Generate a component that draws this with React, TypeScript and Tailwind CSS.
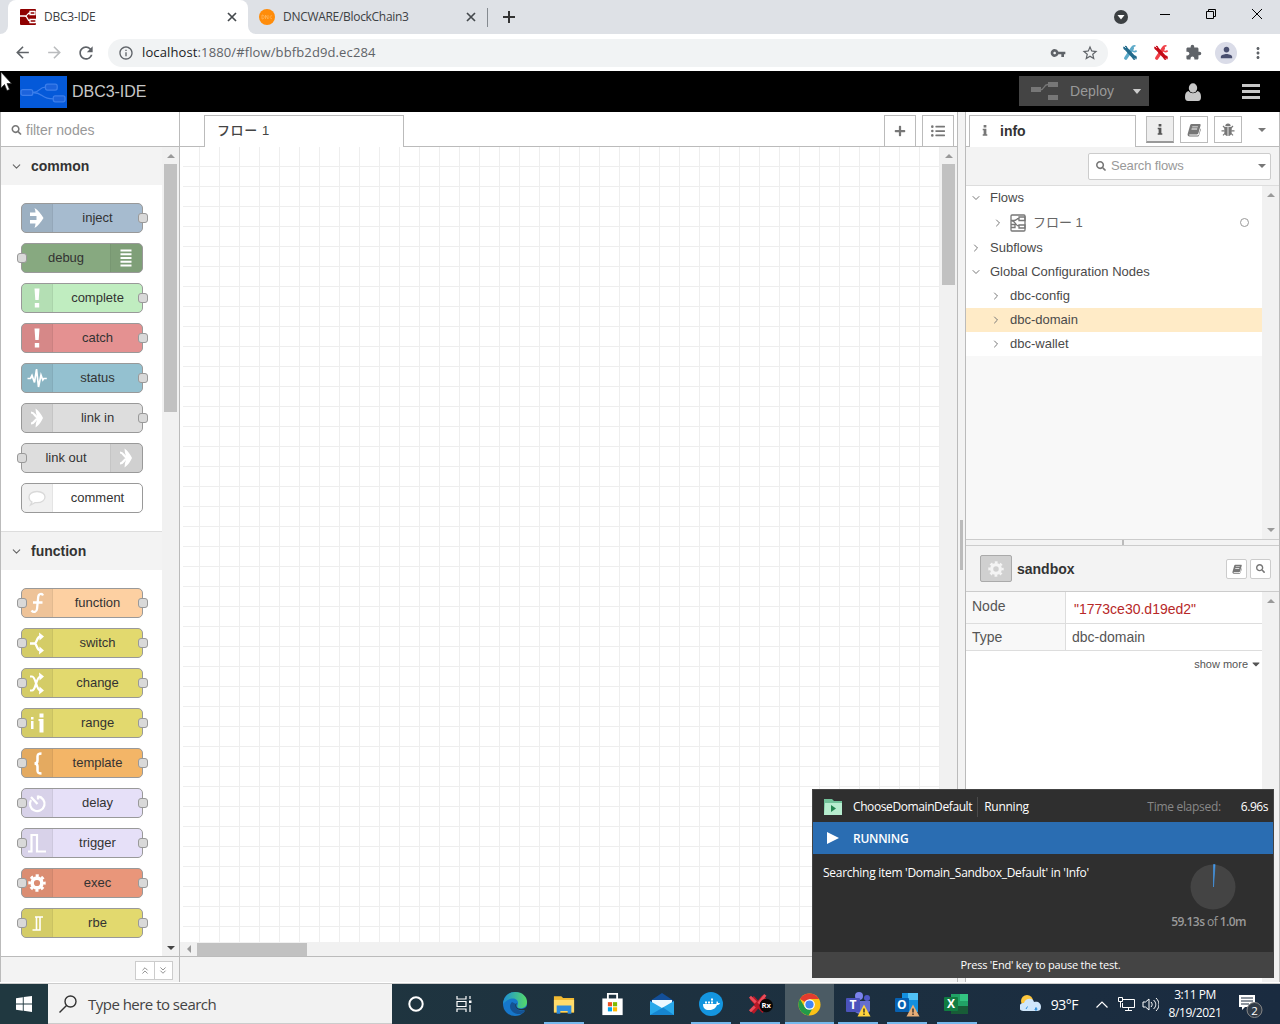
import React from "react";
import { FaSearch, FaPlus, FaListUl, FaCaretDown } from "react-icons/fa";
import { FiChevronDown, FiChevronRight, FiChevronsDown, FiChevronsUp } from "react-icons/fi";
import { MdArrowBack, MdArrowForward, MdRefresh, MdInfoOutline, MdStarBorder, MdVpnKey, MdMoreVert, MdPerson, MdExtension } from "react-icons/md";

type IconProps = { className?: string };

const SEGOE = "font-['Open_Sans','Noto_Sans',sans-serif]";

function FlowLogo({ className, tone }: { className: string; tone: string }) {
  return (
    <svg viewBox="0 0 48 32" className={className} fill="none" stroke={tone} strokeWidth="1.3">
      <rect x="1" y="13.500" width="12" height="6" rx="2" fill="#1c63dc" />
      <rect x="26" y="8" width="12" height="6" rx="2" fill="#1c63dc" />
      <rect x="34" y="20" width="12" height="6" rx="2" fill="#1c63dc" />
      <path d="M13 16.500c8 0 6-5.500 13-5.500M13 16.500c11 0 8 6.500 21 6.500" />
    </svg>
  );
}

function Gear({ className }: IconProps) {
  return (
    <svg viewBox="0 0 18 18" className={className} fill="none" stroke="currentColor">
      <circle cx="9" cy="9" r="4.900" strokeWidth="3.600" />
      <circle cx="9" cy="9" r="7.400" strokeWidth="2.600" strokeDasharray="3.100 2.712" strokeDashoffset="1.550" />
    </svg>
  );
}

function Close({ className }: IconProps) {
  return (
    <svg viewBox="0 0 10 10" className={className} fill="none" stroke="#45494d" strokeWidth="1.700">
      <path d="m1 1 8 8M9 1 1 9" />
    </svg>
  );
}

function Book({ className }: IconProps) {
  return (
    <svg viewBox="0 0 14 14" className={className} fill="currentColor">
      <path fillRule="evenodd" d="M4.6 1h8c.8 0 1.200.6 1 1.300l-2.200 8c-.2.7-.7 1.100-1.400 1.100H2.700c-.5 0-.7.5-.4.8.2.2.4.3.7.3h7.700c.6 0 .9-.3 1.100-.8l1.600-6.200c.5.400.4 1 .3 1.400l-1.700 5.500c-.2.7-.8 1.100-1.400 1.100H2.500C1.200 13.500.2 12 .7 10.700L3.200 2C3.400 1.400 3.900 1 4.600 1zM5.400 3.400l-.3.9h5.600l.3-.9zM4.700 5.600l-.3.9H10l.3-.9z" />
    </svg>
  );
}

function Bug({ className }: IconProps) {
  return (
    <svg viewBox="0 0 14 14" className={className}>
      <path d="M4.300 3.300a2.700 2.700 0 0 1 5.400 0z" fill="currentColor" />
      <path d="M3.300 4h3.300v9C4.500 13 3.300 11 3.300 9zM7.400 4h3.300v5c0 2-1.200 4-3.300 4z" fill="currentColor" />
      <path d="M4 5 2 3M10 5l2-2M3.500 7.800H.5M10.400 7.800h3.100M4 10.400l-2 2M10 10.400l2 2" stroke="currentColor" strokeWidth="1.200" />
    </svg>
  );
}

function InfoGlyph({ className }: IconProps) {
  return (
    <svg viewBox="0 0 6 12" className={className} fill="currentColor">
      <path d="M1.500 0h3v2.600h-3zM.5 4h4v6h1v1.600h-5V10h1V5.600h-1z" />
    </svg>
  );
}

const glyphs: Record<string, React.ReactNode> = {
  inject: <path d="M5 6.500h5.500C10.500 5 10 3.500 9.500 2c3.500 2 6.500 6 9 10-2.500 4-5.500 8-9 10 .5-1.500 1-3 1-4.500H5V14h6.500v-4H5z" fill="#fff" />,
  debug: <path d="M6.500 4.500h11M6.500 8.300h11M6.500 12h11M6.500 15.800h11M6.500 19.500h11" stroke="#fff" strokeWidth="1.900" />,
  alert: <path d="M9.500 2.500h5l-.8 11.500h-3.400zM9.800 17h4.400v4.500H9.800z" fill="#fff" />,
  status: <path d="M2.500 12.500h3l1.500-3 2.500 7L11.500 3l2 18 2.500-12 1.800 5 1-1.500h3" fill="none" stroke="#fff" strokeWidth="1.700" />,
  link: (
    <>
      <path d="M10.500 2.500c3.500 2.500 6 6 7.500 9.500-1.500 3.500-4 7-7.500 9.500l.5-4.500c1.500-3 1.500-7 0-10z" fill="#fff" />
      <path d="M6 6.500c4 0 4 5.500 8 5.500M6 17.500c4 0 4-5.500 8-5.500" fill="none" stroke="#fff" strokeWidth="2.200" />
    </>
  ),
  comment: <path d="M12 5.500c5 0 8 2.500 8 5.500s-3 5.700-8 5.700H10L5.500 19 7 16c-2-1-3-3-3-5 0-3 3-5.500 8-5.500z" fill="#fff" stroke="#d9d9d9" strokeWidth="1.300" />,
  function: <path d="M18 4.500c-1-2.500-4.500-2-4.800 1.500L12 18c-.3 3-3.500 4-5.500 1.500M8 11.500h9.500" fill="none" stroke="#fff" strokeWidth="2.300" />,
  switch: (
    <>
      <path d="M5 12.500h4.500c2.500 0 2-7 6-7M9.500 12.500c2.500 0 2 7 6 7" fill="none" stroke="#fff" strokeWidth="2.400" />
      <path d="M14 1.500 19 5.500l-4.500 4zM14.500 15.500l4.500 4-5 4z" fill="#fff" />
    </>
  ),
  change: (
    <>
      <path d="M5 5.500h2c4 0 4 14 8.500 14M5 19.500h2c4 0 4-14 8.500-14" fill="none" stroke="#fff" strokeWidth="2.200" />
      <path d="M14 1.500 19 5.500l-4.500 4zM14.500 15.500l4.500 4-5 4z" fill="#fff" />
    </>
  ),
  range: <path d="M6 6h2.500v2.500H6zM6 10h2.500v8H6zM14.500 2.500h4v4h-4zM14.500 8h4v13.500h-4zM13.500 8h3v2h-3z" fill="#fff" />,
  template: <path d="M16.500 2.500c-3.500 0-4 .8-4 3v4c0 2-1 3-3 3 2 0 3 1 3 3v4c0 2.200.5 3 4 3" fill="none" stroke="#fff" strokeWidth="2.500" />,
  delay: <path d="M13 5.500a7.300 7.300 0 1 1-7 3.500M6 6l6.500 7M13 4.500v4" fill="none" stroke="#fff" strokeWidth="2.300" />,
  trigger: <path d="M3 20.500h3.500V4h5.500v16.500h9" fill="none" stroke="#fff" strokeWidth="2.200" />,
  rbe: <path d="M7.500 19h4V6h6.500M11.500 6H10M18 6h-3v13h-3.500" fill="none" stroke="#fff" strokeWidth="1.600" />,
};

type PaletteNode = { name: string; icon: string; color: string; left?: boolean; right?: boolean; flip?: boolean };

const commonNodes: PaletteNode[] = [
  { name: "inject", icon: "inject", color: "bg-[#a6bbcf]", right: true },
  { name: "debug", icon: "debug", color: "bg-[#87a980]", left: true, flip: true },
  { name: "complete", icon: "alert", color: "bg-[#c0edc0]", right: true },
  { name: "catch", icon: "alert", color: "bg-[#e49191]", right: true },
  { name: "status", icon: "status", color: "bg-[#94c1d0]", right: true },
  { name: "link in", icon: "link", color: "bg-[#dddddd]", right: true },
  { name: "link out", icon: "link", color: "bg-[#dddddd]", left: true, flip: true },
  { name: "comment", icon: "comment", color: "bg-white" },
];

const functionNodes: PaletteNode[] = [
  { name: "function", icon: "function", color: "bg-[#fdd0a2]", left: true, right: true },
  { name: "switch", icon: "switch", color: "bg-[#e2d96e]", left: true, right: true },
  { name: "change", icon: "change", color: "bg-[#e2d96e]", left: true, right: true },
  { name: "range", icon: "range", color: "bg-[#e2d96e]", left: true, right: true },
  { name: "template", icon: "template", color: "bg-[#f3b567]", left: true, right: true },
  { name: "delay", icon: "delay", color: "bg-[#e6e0f8]", left: true, right: true },
  { name: "trigger", icon: "trigger", color: "bg-[#e6e0f8]", left: true, right: true },
  { name: "exec", icon: "exec", color: "bg-[#e9967a]", left: true, right: true },
  { name: "rbe", icon: "rbe", color: "bg-[#e2d96e]", left: true, right: true },
];

function NodeItem({ node }: { node: PaletteNode }) {
  return (
    <div className={`relative flex h-[30px] w-[122px] rounded-[5px] border border-[#999] ${node.color} ${node.flip ? "flex-row-reverse" : ""}`}>
      <div className={`flex shrink-0 items-center justify-center bg-black/[0.06] ${node.flip ? "w-8 rounded-r-[4px] border-l pr-px" : "w-[31px] rounded-l-[4px] border-r pr-px"} border-black/5`}>
        {node.icon === "exec" ? <Gear className="h-[18px] w-[18px] text-white" /> : <svg viewBox="0 0 24 24" className="h-6 w-6">{glyphs[node.icon]}</svg>}
      </div>
      <div className="flex-1 text-center text-[13px] leading-[27px] text-[#333]">{node.name}</div>
      {node.left && <i className="absolute top-[9px] -left-[5px] h-[10px] w-[10px] rounded-[3px] border border-[#999] bg-[#d9d9d9]" />}
      {node.right && <i className="absolute top-[9px] -right-[6px] h-[10px] w-[10px] rounded-[3px] border border-[#999] bg-[#d9d9d9]" />}
    </div>
  );
}

function Category({ title, nodes, last }: { title: string; nodes: PaletteNode[]; last?: boolean }) {
  return (
    <div className={last ? "" : "border-b border-[#ddd]"}>
      <div className="flex h-[38px] items-center bg-[#f3f3f3] pl-[9px] text-sm font-bold text-[#333]">
        <FiChevronDown className="h-[13px] w-[13px] text-[#666]" />
        <span className="ml-2">{title}</span>
      </div>
      <div className="flex flex-col gap-[10px] py-[18px] pl-5">
        {nodes.map((n) => <NodeItem key={n.name} node={n} />)}
      </div>
    </div>
  );
}

function Tri({ dir, dark }: { dir: "up" | "down" | "left"; dark?: boolean }) {
  const d = dir === "up" ? "M0 6 4 2l4 4z" : dir === "down" ? "M0 2h8L4 6z" : "M6 0v8L2 4z";
  return <svg viewBox="0 0 8 8" className={`h-2 w-2 ${dark ? "text-[#444]" : "text-[#999]"}`} fill="currentColor"><path d={d} /></svg>;
}

function Caret() {
  return <svg viewBox="0 0 8 4" className="h-1 w-2" fill="#777"><path d="M0 0h8L4 4z" /></svg>;
}

function Palette() {
  return (
    <div className="flex w-[180px] flex-col border-x border-[#bbb] bg-white">
      <div className="flex h-[35px] items-center border-b border-[#bbb] pt-px pl-[10px] text-sm text-[#999]">
        <FaSearch className="h-[10px] w-[11px] text-[#777]" />
        <span className="ml-1">filter nodes</span>
      </div>
      <div className="flex h-[809px]">
        <div className="w-[161px] overflow-hidden">
          <Category title="common" nodes={commonNodes} />
          <Category title="function" nodes={functionNodes} last />
        </div>
        <div className="flex flex-1 flex-col items-center bg-[#f1f1f1]">
          <div className="flex h-[17px] items-center"><Tri dir="up" /></div>
          <div className="h-[248px] w-[13px] bg-[#c1c1c1]" />
          <div className="mt-auto flex h-[17px] items-center"><Tri dir="down" dark /></div>
        </div>
      </div>
      <div className="flex flex-1 items-center justify-end border-t border-[#bbb] bg-[#f3f3f3] pt-px pr-[6px]">
        <div className="flex h-[19px] w-[38px] divide-x divide-[#ccc] border border-[#ccc] bg-white text-[#888]">
          <div className="flex flex-1 items-center justify-center"><FiChevronsUp className="h-[11px]" /></div>
          <div className="flex flex-1 items-center justify-center"><FiChevronsDown className="h-[11px]" /></div>
        </div>
      </div>
    </div>
  );
}

function Workspace() {
  return (
    <div className="flex w-[778px] flex-col border-r border-[#bbb] bg-white">
      <div className="flex h-[35px] items-end">
        <div className="h-full w-6 border-b border-[#bbb]" />
        <div className="h-8 w-[200px] border-x border-t border-[#bbb] pl-3 text-[13px] leading-[29px] font-medium tracking-[0.6px] text-[#444] font-['Liberation_Sans','Noto_Sans_CJK_JP',sans-serif]">フロー 1</div>
        <div className="flex h-full flex-1 items-end justify-end gap-[6px] border-b border-[#bbb] pr-[3px] text-[#777]">
          <div className="flex h-[31px] w-8 items-center justify-center border-x border-t border-[#bbb]"><FaPlus className="h-3 w-3" /></div>
          <div className="flex h-[31px] w-8 items-center justify-center border-x border-t border-[#bbb]"><FaListUl className="h-[14px] w-[14px]" /></div>
        </div>
      </div>
      <div className="flex h-[795px] pl-[3px]">
        <div className="w-[757px] bg-[linear-gradient(to_right,#eee_1px,transparent_1px),linear-gradient(to_bottom,#eee_1px,transparent_1px)] bg-[size:20px_20px] bg-[position:16px_19px]" />
        <div className="flex flex-1 flex-col items-center bg-[#f1f1f1]">
          <div className="flex h-[17px] items-center"><Tri dir="up" /></div>
          <div className="h-[121px] w-[13px] bg-[#c1c1c1]" />
        </div>
      </div>
      <div className="flex h-[14px] items-center bg-[#f1f1f1]">
        <div className="flex w-[17px] justify-center"><Tri dir="left" /></div>
        <div className="h-[13px] w-[110px] bg-[#c1c1c1]" />
      </div>
      <div className="flex-1 border-t border-[#bbb] bg-[#f3f3f3]" />
    </div>
  );
}

function TreeRow({ label, open, nested, active }: { label: string; open?: boolean; nested?: boolean; active?: boolean }) {
  return (
    <div className={`flex h-6 items-center pb-px ${nested ? "pl-[24px]" : "pl-[4px]"} ${active ? "bg-[#ffebc7]" : "bg-white"}`}>
      {open ? <FiChevronDown className="h-3 w-3 text-[#777]" /> : <FiChevronRight className="h-3 w-3 text-[#777]" />}
      <span className="ml-2">{label}</span>
    </div>
  );
}

function Sidebar() {
  return (
    <div className="flex w-[315px] flex-col border-x border-[#bbb] bg-white text-[#555]">
      <div className="flex h-[35px] items-end">
        <div className="h-full w-[3px] border-b border-[#bbb]" />
        <div className="flex h-8 w-[167px] items-center border-x border-t border-[#bbb] pb-[2px] pl-3 text-sm font-bold text-[#333]">
          <InfoGlyph className="h-[11px] w-[6px] text-[#777]" />
          <span className="ml-3">info</span>
        </div>
        <div className="flex h-full flex-1 items-center border-b border-[#bbb] pt-px pl-[10px] text-[#777]">
          <div className="flex h-[27px] w-7 items-center justify-center border border-b-2 border-[#bbb] border-b-[#999] bg-[#eee]"><InfoGlyph className="h-[11px] w-[6px] text-[#555]" /></div>
          <div className="ml-[6px] flex h-[27px] w-7 items-center justify-center border border-[#bbb]"><Book className="h-[14px] w-[14px]" /></div>
          <div className="ml-[6px] flex h-[27px] w-7 items-center justify-center border border-[#bbb]"><Bug className="h-[14px] w-[14px]" /></div>
          <div className="ml-4"><Caret /></div>
        </div>
      </div>
      <div className="flex h-[39px] items-center justify-end border-b border-[#ddd] bg-[#f3f3f3] pr-2">
        <div className="flex h-[27px] w-[183px] items-center rounded-[2px] border border-[#ccc] bg-white pr-1 pl-[7px] text-[13px] text-[#999]">
          <FaSearch className="h-[10px] w-[10px] text-[#777]" />
          <span className="ml-[5px] flex-1 tracking-[-0.15px]">Search flows</span>
          <Caret />
        </div>
      </div>
      <div className="flex h-[353px]">
        <div className="w-[296px] bg-[#f8f8f8] text-[13px] text-[#4a4a4a]">
          <TreeRow label="Flows" open />
          <div className="flex h-[26px] items-center bg-white pr-[13px] pb-px pl-[26px] font-['Liberation_Sans','Noto_Sans_CJK_JP',sans-serif]">
            <FiChevronRight className="h-3 w-3 text-[#777]" />
            <svg viewBox="0 0 16 18" className="ml-[6px] h-[18px] w-4" fill="none" stroke="#777" strokeWidth="1.300">
              <rect x="1" y="1" width="14" height="16" rx="1" />
              <path d="M1 6.500h3c3 0 2-2 5-2M1 6.500c5 0 4 5.500 8 5.500M9 3h6v3.500H9zM9 11h6v3H9zM1 10.500h4v3H1" />
            </svg>
            <span className="ml-[7px] flex-1 text-[#666]">フロー 1</span>
            <span className="h-[9px] w-[9px] rounded-full border border-[#999]" />
          </div>
          <TreeRow label="Subflows" />
          <TreeRow label="Global Configuration Nodes" open />
          <TreeRow label="dbc-config" nested />
          <TreeRow label="dbc-domain" nested active />
          <TreeRow label="dbc-wallet" nested />
        </div>
        <div className="flex flex-1 flex-col items-center justify-between bg-[#f1f1f1] py-[5px]"><Tri dir="up" /><Tri dir="down" /></div>
      </div>
      <div className="flex h-[7px] items-center justify-center border-y border-[#ccc] bg-[#f3f3f3]"><div className="h-[5px] w-[2px] bg-[#bbb]" /></div>
      <div className="flex h-[46px] items-center border-b border-[#ccc] bg-[#f3f3f3] pr-2 pl-[14px]">
        <div className="flex h-[27px] w-8 items-center justify-center rounded-[2px] border border-[#aaa] bg-[#d0d0d0]"><Gear className="h-4 w-4 text-[#f4f4f4]" /></div>
        <span className="ml-[5px] flex-1 text-sm font-bold text-[#333]">sandbox</span>
        <div className="flex h-5 w-[21px] items-center justify-center rounded-[2px] border border-[#ccc] bg-white text-[#777]"><Book className="h-[10px] w-[10px]" /></div>
        <div className="ml-[3px] flex h-5 w-[21px] items-center justify-center rounded-[2px] border border-[#ccc] bg-white text-[#777]"><FaSearch className="h-[9px] w-[9px]" /></div>
      </div>
      <div className="flex flex-1">
        <div className="w-[296px]">
          <div className="flex h-8 border-b border-[#ddd] text-sm">
            <div className="w-[100px] border-r border-[#ddd] bg-[#f8f8f8] pt-1 pl-[6px]">Node</div>
            <div className="pt-[7px] pl-2 text-[#b72828]">"1773ce30.d19ed2"</div>
          </div>
          <div className="flex h-[27px] border-b border-[#ddd] text-sm">
            <div className="w-[100px] border-r border-[#ddd] bg-[#f8f8f8] pt-[3px] pl-[6px]">Type</div>
            <div className="pt-[3px] pl-[6px]">dbc-domain</div>
          </div>
          <div className="flex h-[26px] items-center justify-end gap-1 pr-[2px] text-[11px]">show more <FaCaretDown className="h-[12px] w-2" /></div>
        </div>
        <div className="flex flex-1 flex-col items-center bg-[#f1f1f1] pt-[5px]"><Tri dir="up" /></div>
      </div>
    </div>
  );
}

function CrossTool({ a, b }: { a: string; b: string }) {
  return (
    <svg viewBox="0 0 16 18" className="h-[17px] w-4" fill="none">
      <path d="m3.500 15 7-10.500" stroke={a} strokeWidth="3.600" strokeLinecap="round" />
      <path d="m3 4 4.500 5 5 5.500" stroke={b} strokeWidth="3.600" strokeLinecap="round" />
      <path d="M13.800 2.200A3 3 0 1 0 15 7" stroke={a} strokeWidth="1.700" />
      <circle cx="13" cy="14.500" r="2.300" fill={b} /><circle cx="3" cy="4" r="2.100" fill={b} />
      <path d="m1.500 2 2 2M13 15.500l2 1.500" stroke="#fff" strokeWidth="1" />
    </svg>
  );
}

function Browser() {
  return (
    <div className={SEGOE}>
      <div className="flex h-[34px] bg-[#dee1e6] text-xs text-[#3c4043]">
        <div className="w-2 bg-white"><div className="h-full rounded-br-lg bg-[#dee1e6]" /></div>
        <div className="flex w-[240px] items-center rounded-t-lg bg-white pr-[11px] pl-3">
          <svg viewBox="0 0 16 16" className="h-4 w-4" fill="none" stroke="#fff" strokeWidth="1.300">
            <rect width="16" height="16" rx="1" fill="#8f0000" stroke="none" />
            <path d="M0 7h5c3 0 2-3 5-3M5 7c3 0 2 5 5 5M10 2.500h5v3h-5zM10 10.500h6v3h-6z" />
          </svg>
          <span className="ml-2 flex-1 tracking-[-0.25px]">DBC3-IDE</span>
          <Close className="h-[10px] w-[10px]" />
        </div>
        <div className="bg-white"><div className="flex h-full w-[239px] items-center rounded-bl-lg bg-[#dee1e6] pr-[11px] pl-[11px]">
          <svg viewBox="0 0 16 16" className="h-4 w-4"><circle cx="8" cy="8" r="8" fill="#ff8c0a" /><path d="M3 6v4c3 0 3-4 0-4M6.500 10V6l2.500 4V6M13 7c-2.500-1.500-2.500 3.500 0 2.500" fill="none" stroke="#ffb559" strokeWidth=".8" /></svg>
          <span className="ml-2 flex-1 tracking-[-0.3px]">DNCWARE/BlockChain3</span>
          <Close className="h-[10px] w-[10px]" />
        </div></div>
        <div className="mt-2 h-[19px] w-px bg-[#858a90]" />
        <div className="flex items-center pl-[15px]"><svg viewBox="0 0 12 12" className="h-3 w-3" stroke="#333" strokeWidth="2"><path d="M0 6h12M6 0v12" /></svg></div>
        <div className="ml-auto flex items-center text-black">
          <svg viewBox="0 0 14 14" className="mt-[-1px] h-[14px] w-[14px]"><circle cx="7" cy="7" r="7" fill="#3c4043" /><path d="M3.500 5h7L7 9.500z" fill="#fff" /></svg>
          <svg viewBox="0 0 12 12" className="mt-[-6px] ml-[31px] h-3 w-3" stroke="currentColor"><path d="M1 6.500h10" /></svg>
          <svg viewBox="0 0 12 12" className="mt-[-6px] ml-[34px] h-3 w-3" fill="none" stroke="currentColor"><path d="M1.500 3.500h7v7h-7zM3.500 3V1.500h7v7H9" /></svg>
          <svg viewBox="0 0 12 12" className="mt-[-6px] mr-[17px] ml-[34px] h-3 w-3" stroke="currentColor"><path d="m1 1 10 10M11 1 1 11" /></svg>
        </div>
      </div>
      <div className="flex h-[37px] items-center bg-white pl-[13px] text-[#5f6368]">
        <MdArrowBack className="h-[19px] w-[19px]" />
        <MdArrowForward className="ml-[13px] h-[19px] w-[19px] text-[#babcbe]" />
        <MdRefresh className="ml-[12px] h-[20px] w-[20px]" />
        <div className="ml-3 flex h-7 w-[1000px] items-center rounded-full bg-[#f1f3f4] pl-[10px]">
          <MdInfoOutline className="h-4 w-4" />
          <span className="ml-2 flex-1 text-[13px] tracking-[0.12px]"><span className="text-[#202124]">localhost</span>:1880/#flow/bbfb2d9d.ec284</span>
          <MdVpnKey className="h-4 w-4" />
          <MdStarBorder className="mr-[9px] ml-[15px] h-[18px] w-[18px]" />
        </div>
        <div className="ml-[14px]"><CrossTool a="#5daac9" b="#236b8c" /></div>
        <div className="ml-[15px]"><CrossTool a="#f04048" b="#c50b18" /></div>
        <MdExtension className="ml-[16px] h-[17px] w-[17px]" />
        <div className="ml-[13px] flex h-[22px] w-[22px] items-center justify-center rounded-full bg-[#dadce8]"><MdPerson className="h-[17px] w-[17px] text-[#4a5070]" /></div>
        <MdMoreVert className="ml-3 h-[18px] w-[18px]" />
      </div>
    </div>
  );
}

function AppHeader() {
  return (
    <div className="flex h-[41px] items-center bg-black pt-px pl-5">
      <div className="h-8 w-[47px] bg-[#0459d9]"><FlowLogo className="h-8 w-[47px]" tone="#3c7eea" /></div>
      <span className="ml-[5px] text-base tracking-[-0.05px] text-[#c7c7c7]">DBC3-IDE</span>
      <div className="-mt-[2px] ml-auto flex h-[30px] w-[130px] items-center bg-[#444] pl-3 text-[#999]">
        <svg viewBox="0 0 28 20" className="h-5 w-7" fill="#777"><path d="M0 6h10v5H0zM17 1h10v5H17zM17 14h10v5H17z" /><path d="M9 9c5 0 3-5.500 8-5.500" fill="none" stroke="#777" strokeWidth="1.400" /></svg>
        <span className="ml-[11px] flex-1 text-sm tracking-[0.1px]">Deploy</span>
        <svg viewBox="0 0 10 6" className="mr-[7px] h-[5px] w-[10px]" fill="#ccc"><path d="M0 0h10L5 6z" /></svg>
      </div>
      <svg viewBox="0 0 16 18" className="-mt-px ml-9 h-[18px] w-4" fill="#c7c7c7"><ellipse cx="8" cy="5" rx="4.200" ry="4.700" /><path d="M3.500 8C1 8.500 0 11 0 14c0 2.500 1 4 3 4h10c2 0 3-1.500 3-4 0-3-1-5.500-3.500-6-2.500 3-6.500 3-9 0z" /></svg>
      <svg viewBox="0 0 18 15" className="-mt-px mr-5 ml-[41px] h-[15px] w-[18px]" stroke="#c7c7c7" strokeWidth="3"><path d="M0 1.500h18M0 7.500h18M0 13.500h18" /></svg>
    </div>
  );
}

function TestOverlay() {
  return (
    <div className={`absolute top-[789px] left-[812px] flex h-[189px] w-[462px] flex-col border border-[#444] bg-[#2f2f2f] text-xs text-white ${SEGOE}`}>
      <div className="flex h-8 items-center pt-px pr-[5px] pl-[11px]">
        <svg viewBox="0 0 18 16" className="h-4 w-[18px]"><path d="M0 0h8l2 2h8v14H0z" fill="#72c29a" /><path d="M1 4h17v12H0z" fill="#b7edcf" /><path d="M7 6v7l5-3.500z" fill="#238650" /></svg>
        <span className="ml-[11px] tracking-[-0.4px]">ChooseDomainDefault</span>
        <span className="ml-[5px] h-5 w-px bg-[#4a4a4a]" />
        <span className="ml-[6px] flex-1 tracking-[-0.25px]">Running</span>
        <span className="tracking-[-0.3px] text-[#888]">Time elapsed:</span>
        <span className="ml-[20px] tracking-[-0.45px]">6.96s</span>
      </div>
      <div className="flex h-8 items-center bg-[#2a6db2] pt-px pl-[14px]">
        <svg viewBox="0 0 12 12" className="-mt-px h-3 w-3" fill="#fff"><path d="m0 0 12 6-12 6z" /></svg>
        <span className="ml-[14px] font-semibold tracking-[-0.25px]">RUNNING</span>
      </div>
      <div className="flex h-[98px] justify-between pt-[10px] pr-[27px] pl-[10px]">
        <span className="pt-px tracking-[-0.28px]">Searching item 'Domain_Sandbox_Default' in 'Info'</span>
        <div className="flex flex-col items-end">
          <svg viewBox="0 0 46 46" className="mr-[10px] h-[46px] w-[46px]"><circle cx="23" cy="23" r="22.500" fill="#444" /><path d="M23.500 23V.5h1.600z" fill="#4397e8" stroke="#4397e8" strokeWidth=".6" /></svg>
          <span className="mt-1 tracking-[-0.55px] text-[#999]"><b className="font-semibold">59.13s</b> of <b className="font-semibold">1.0m</b></span>
        </div>
      </div>
      <div className="flex flex-1 items-center justify-center bg-[#444] pt-px pr-[5px] text-[11px] tracking-[-0.22px]">Press 'End' key to pause the test.</div>
    </div>
  );
}

const chromeIcon = (
  <svg viewBox="0 0 24 24" className="h-[23px] w-[23px]">
    <circle cx="12" cy="12" r="11.500" fill="#fbc116" />
    <path d="M12 12 2 6.200A11.500 11.500 0 0 1 22 6.300H12z" fill="#e33b2e" />
    <path d="M2 6.200a11.500 11.500 0 0 0 9 17.200l5-8.800L12 12 7 14.500z" fill="#229a49" />
    <circle cx="12" cy="12" r="5.600" fill="#fff" /><circle cx="12" cy="12" r="4.300" fill="#4285f4" />
  </svg>
);

const warning = (c: string) => <><path d="m18 12.500-6.500 12h13z" fill={c} /><path d="M18 16.500v4M18 21.500V23" stroke="#222" strokeWidth="1.300" /></>;

const taskIcons: { bar?: boolean; active?: boolean; art: React.ReactNode }[] = [
  { art: <svg viewBox="0 0 16 16" className="mr-[2px] h-4 w-4"><circle cx="8" cy="8" r="6.700" fill="none" stroke="#fff" strokeWidth="2" /></svg> },
  { art: <svg viewBox="0 0 16 16" className="mr-[4px] h-4 w-4" fill="none" stroke="#fff" strokeWidth="1.200"><path d="M1 0v3h9V0M1 16v-3h9v3M1 5.500h9v5H1zM14 0v3M14 9v7" /><path d="M13 4.500h2.500v2.500H13z" fill="#fff" stroke="none" /></svg> },
  { art: <svg viewBox="0 0 24 24" className="h-6 w-6"><defs><linearGradient id="edgeTop"><stop stopColor="#1d8ed6" /><stop offset="1" stopColor="#55db69" /></linearGradient></defs><circle cx="12" cy="12" r="12" fill="#1677cb" /><path d="M0 12C1 3 7 0 12 0c8 0 12 5 12 10 0 5-4 7-8 6-3-1-1-3-1-5 0-5-8-7-15 1z" fill="url(#edgeTop)" /><path d="M9 10c-5 5 0 13 9 12 2-1 4-3 4.500-4.500C16 21 12 16 13 12z" fill="#155293" /><path d="M14 11c-2 3 0 6 4 6 2 0 5-1 6-3v6l-3-2c-7 2-11-5-7-7z" fill="#21363f" /></svg> },
  { bar: true, art: <svg viewBox="0 0 24 22" className="h-[21px] w-[22px]"><path d="M1 2h8l2 2h12v16H1z" fill="#f2ba32" /><path d="M1 6h22v13H1z" fill="#ffdc6b" /><path d="M4 12h16v9h-4v-3H8v3H4z" fill="#2d8bdc" /></svg> },
  { art: <svg viewBox="0 0 24 26" className="h-[24px] w-[23px]"><path d="M7 8V2h10v6" fill="none" stroke="#fff" strokeWidth="2" /><path d="M1 7h22v18H1z" fill="#fff" /><path d="M7 11h4.500v4.500H7z" fill="#ef5022" /><path d="M12.500 11H17v4.500h-4.500z" fill="#7eba02" /><path d="M7 16.500h4.500V21H7z" fill="#02a4ed" /><path d="M12.500 16.500H17V21h-4.500z" fill="#ffb902" /></svg> },
  { art: <svg viewBox="0 0 24 22" className="h-[22px] w-6"><path d="M0 8 12 0l12 8v14H0z" fill="#134f99" /><path d="M2 7h20v8H2z" fill="#eef8ff" /><path d="M0 8l12 7 12-7v14H0z" fill="#29a8ea" /><path d="m0 22 13-7.500L24 22z" fill="#1685d0" /></svg> },
  { bar: true, art: <svg viewBox="0 0 24 24" className="h-6 w-6"><circle cx="12" cy="12" r="12" fill="#1495df" /><path d="M4 12h13c1 0 0-2 1-3 1 1 1 1.500 1 2 1-.2 2 0 2 .5-1 1.500-2 1.500-3 1.500-1 3-4 5-8 5-4 0-6-2-6-6zM6 9.500h2v2H6zM9 9.500h2v2H9zM12 9.500h2v2h-2zM12 6.500h2v2h-2z" fill="#fff" /></svg> },
  { bar: true, art: <svg viewBox="0 0 26 24" className="h-[23px] w-[25px]"><path d="m17 4-13 16M4 5l13 14" stroke="#b71827" strokeWidth="5.500" /><path d="m18 2-7 9M2 19l5-5M2 4l6 6" stroke="#eb4c59" strokeWidth="3" /><circle cx="19" cy="13" r="7" fill="#090909" /><text x="14" y="16" fontSize="8" fontWeight="bold" fontFamily="Open Sans" fill="#fff">Rx</text></svg> },
  { bar: true, active: true, art: chromeIcon },
  { bar: true, art: <svg viewBox="0 0 25 25" className="h-[25px] w-[25px]"><circle cx="13" cy="4" r="4" fill="#7b83eb" /><circle cx="21" cy="6" r="3" fill="#5059c9" /><path d="M8 9h16v10c-3 4-11 5-16 0z" fill="#656ed0" /><rect y="6" width="14" height="14" rx="1" fill="#4b53bc" /><text x="3.500" y="17" fontSize="12" fontWeight="bold" fontFamily="Open Sans" fill="#fff">T</text>{warning("#ffd43d")}</svg> },
  { bar: true, art: <svg viewBox="0 0 25 25" className="h-[25px] w-[25px]"><path d="M7 1h16v19H7z" fill="#1490df" /><path d="M13 1h10v7H13z" fill="#50c2f7" /><rect y="6" width="14" height="14" rx="1" fill="#0761b2" /><text x="2" y="17" fontSize="12" fontWeight="bold" fontFamily="Open Sans" fill="#fff">O</text>{warning("#e6ad77")}</svg> },
  { bar: true, art: <svg viewBox="0 0 25 24" className="h-6 w-[25px]"><path d="M7 2h17v20H7z" fill="#21a366" /><path d="M16 2h8v7h-8z" fill="#33c481" /><path d="M7 14h17v8H7z" fill="#185c37" /><rect y="5" width="14" height="14" rx="1" fill="#107c41" /><text x="3" y="16" fontSize="12" fontWeight="bold" fontFamily="Open Sans" fill="#fff">X</text></svg> },
];

function Taskbar() {
  return (
    <div className={`flex h-10 bg-linear-to-r from-[#21383f] to-[#1a2b40] text-white ${SEGOE}`}>
      <div className="flex w-12 items-center justify-center bg-[#203840]"><svg viewBox="0 0 16 16" className="h-4 w-4" fill="#fff"><path d="m0 2.200 6.800-1v6.300H0zM7.700 1.100 16 0v7.500H7.700zM0 8.400h6.800v6.400L0 13.800zM7.700 8.400H16V16l-8.300-1.200z" /></svg></div>
      <div className="flex w-[344px] items-center border-b border-[#ccc] bg-[#f2f2f2] pl-[11px] text-[#444]">
        <svg viewBox="0 0 18 18" className="h-[18px] w-[18px]" fill="none" stroke="#333" strokeWidth="1.400"><circle cx="11.500" cy="6.500" r="5.500" /><path d="m7.500 10.500-7 7" /></svg>
        <span className="ml-[11px] pt-px text-[15px] tracking-[-0.52px]">Type here to search</span>
      </div>
      <div className="flex">
        {taskIcons.map((t, i) => (
          <div key={i} className={`flex w-[49.1px] flex-col items-center ${t.active ? "bg-[#4b5b64]" : ""}`}>
            <div className="flex h-[38px] items-center justify-center pt-[2px]">{t.art}</div>
            {t.bar && <div className={`h-[2px] bg-[#76b9ed] ${t.active ? "w-full" : "w-10"}`} />}
          </div>
        ))}
      </div>
      <div className="ml-auto flex items-center pr-[17px]">
        <svg viewBox="0 0 22 18" className="h-[18px] w-[22px]"><circle cx="7" cy="6" r="6" fill="#ffc83e" /><path d="M3 16a4 4 0 0 1 1-8c1-5 9-6 10-1 4-1 7 1 7 5 0 3-2 4-4 4z" fill="#cfe6fb" /><path d="M6 14l1.500-2.500M16 12.500c2 2 0 4-1 2z" stroke="#2f91e0" fill="#2f91e0" /></svg>
        <span className="ml-[9px] pt-[2px] text-sm tracking-[-0.5px]">93°F</span>
        <svg viewBox="0 0 12 7" className="ml-[18px] h-[7px] w-3" fill="none" stroke="#fff" strokeWidth="1.200"><path d="m.5 6.500 5.500-5.500 5.500 5.500" /></svg>
        <svg viewBox="0 0 17 15" className="ml-[10px] h-[15px] w-[17px]" fill="none" stroke="#fff"><path d="M5 2.500h11.500v8H4.500V6M10.500 10.500v3M7 13.500h7M.5.500h4v4h-4zM2.500 4.500v6" /></svg>
        <svg viewBox="0 0 17 15" className="ml-[7px] h-[15px] w-[17px]" fill="none" stroke="#fff"><path d="M1 5h2.500L7 2v11L3.500 10H1zM9 5c1.500 1.500 1.500 3.500 0 5M11.500 3c3 2.500 3 6.500 0 9M14 1c4 4 4 9 0 13" /></svg>
        <div className="ml-[9px] w-[54px] text-center text-[12px] leading-[18px] tracking-[-0.45px] whitespace-nowrap">3:11 PM<br />8/19/2021</div>
        <svg viewBox="0 0 25 26" className="mt-[4px] ml-[16px] h-[26px] w-[25px]"><path d="M1 2h16v12H7l-3 3v-3H1z" fill="#fff" /><path d="M3 5h12M3 8h12M3 11h8" stroke="#1d2d40" strokeWidth="1.200" /><circle cx="16.500" cy="17" r="7.500" fill="#303a46" stroke="#888" /><text x="13.300" y="21.500" fontSize="11.500" fontFamily="Open Sans" fill="#fff">2</text></svg>
      </div>
    </div>
  );
}

export default function App() {
  return (
    <div className="relative flex h-[1024px] w-[1280px] flex-col overflow-hidden bg-white font-['Liberation_Sans','Noto_Sans_CJK_JP',sans-serif]">
      <Browser />
      <AppHeader />
      <div className="flex h-[872px] border-b border-[#ccc] pb-px">
        <Palette />
        <Workspace />
        <div className="flex w-[7px] items-center justify-center bg-[#f3f3f3] pb-1"><div className="h-[50px] w-[3px] bg-[#bbb]" /></div>
        <Sidebar />
      </div>
      <Taskbar />
      <TestOverlay />
      <svg viewBox="0 0 12 20" className="absolute top-[72px] left-0 h-5 w-3"><path d="M1 0v16l3.500-3.500 2.500 6 2.500-1-2.500-6h4.500z" fill="#fff" stroke="#222" strokeWidth=".7" /></svg>
    </div>
  );
}
